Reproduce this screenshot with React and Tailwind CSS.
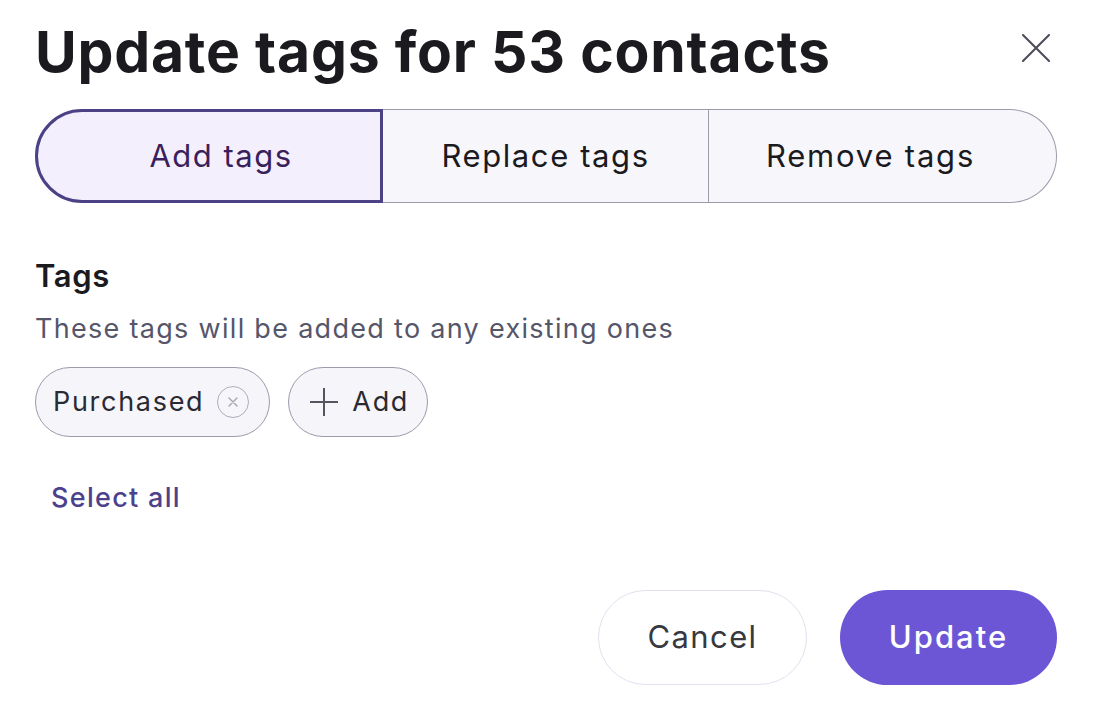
export default function App() {
  return (
    <div className="w-[1094px] h-[722px] bg-white px-[35px] pt-[20px] font-['Inter',sans-serif] text-[#1a1a1f]">
      <div className="flex items-start justify-between h-[66px]">
        <h1 className="text-[57px] leading-none font-bold tracking-[0.8px] pt-[3px]">Update tags for 53 contacts</h1>
        <button className="mt-[14px] mr-[9px]">
          <svg width="28" height="28" viewBox="0 0 28 28" fill="none" stroke="#4a4a58" strokeWidth="2" strokeLinecap="round">
            <path d="M1 1L27 27M27 1L1 27" />
          </svg>
        </button>
      </div>

      {/* segmented control */}
      <div className="mt-[23px] flex h-[94px] w-[1022px] text-[31px]">
        <button className="w-[348px] h-full pl-6 flex items-center justify-center tracking-[1.5px] rounded-l-full border-[3px] border-[#4b4185] bg-[#f4effd] text-[#3a1f5d]">
          Add tags
        </button>
        <button className="w-[326px] h-full flex items-center justify-center tracking-[1.6px] border-y-[1.5px] border-r-[1.5px] border-[#9d9aab] bg-[#f7f7fb]">
          Replace tags
        </button>
        <button className="w-[348px] h-full pr-6 flex items-center justify-center tracking-[1.8px] rounded-r-full border-y-[1.5px] border-r-[1.5px] border-[#9d9aab] bg-[#f7f7fb]">
          Remove tags
        </button>
      </div>

      <div className="mt-[57px] text-[31px] font-semibold leading-none tracking-[0.6px]">Tags</div>
      <div className="mt-[24px] text-[27px] text-[#56566a] leading-none tracking-[1.3px]">These tags will be added to any existing ones</div>

      <div className="mt-[25px] flex gap-[18px] text-[27px] tracking-[1.7px] text-[#2a2a33]">
        <div className="h-[70px] flex items-center gap-[13px] pl-[17px] pr-[20px] rounded-full border-[1.5px] border-[#9d9aab] bg-[#f5f5fa]">
          Purchased
          <span className="w-[32px] h-[32px] rounded-full border-[1.5px] border-[#b0aebb] flex items-center justify-center">
            <svg width="10" height="10" viewBox="0 0 10 10" fill="none" stroke="#a6a4b2" strokeWidth="1.4" strokeLinecap="round">
              <path d="M1 1L9 9M9 1L1 9" />
            </svg>
          </span>
        </div>
        <div className="h-[70px] flex items-center gap-[14px] pl-[21px] pr-[18px] rounded-full border-[1.5px] border-[#9d9aab] bg-[#f5f5fa]">
          <svg width="28" height="28" viewBox="0 0 28 28" fill="none" stroke="#55555f" strokeWidth="2">
            <path d="M14 0V28M0 14H28" />
          </svg>
          Add
        </div>
      </div>

      <div className="mt-[47px] pl-[16px] text-[27px] font-medium text-[#4c418c] leading-none tracking-[1.3px]">Select all</div>

      <div className="mt-[79px] flex justify-end gap-[33px] w-[1022px]">
        <button className="w-[209px] h-[95px] rounded-full border-[1.5px] border-[#e2e0ef] bg-white text-[31px] tracking-[1.4px] text-[#38383f]">Cancel</button>
        <button className="w-[217px] h-[95px] rounded-full bg-[#6d56d6] text-[31px] font-medium tracking-[2px] text-white">Update</button>
      </div>
    </div>
  );
}
